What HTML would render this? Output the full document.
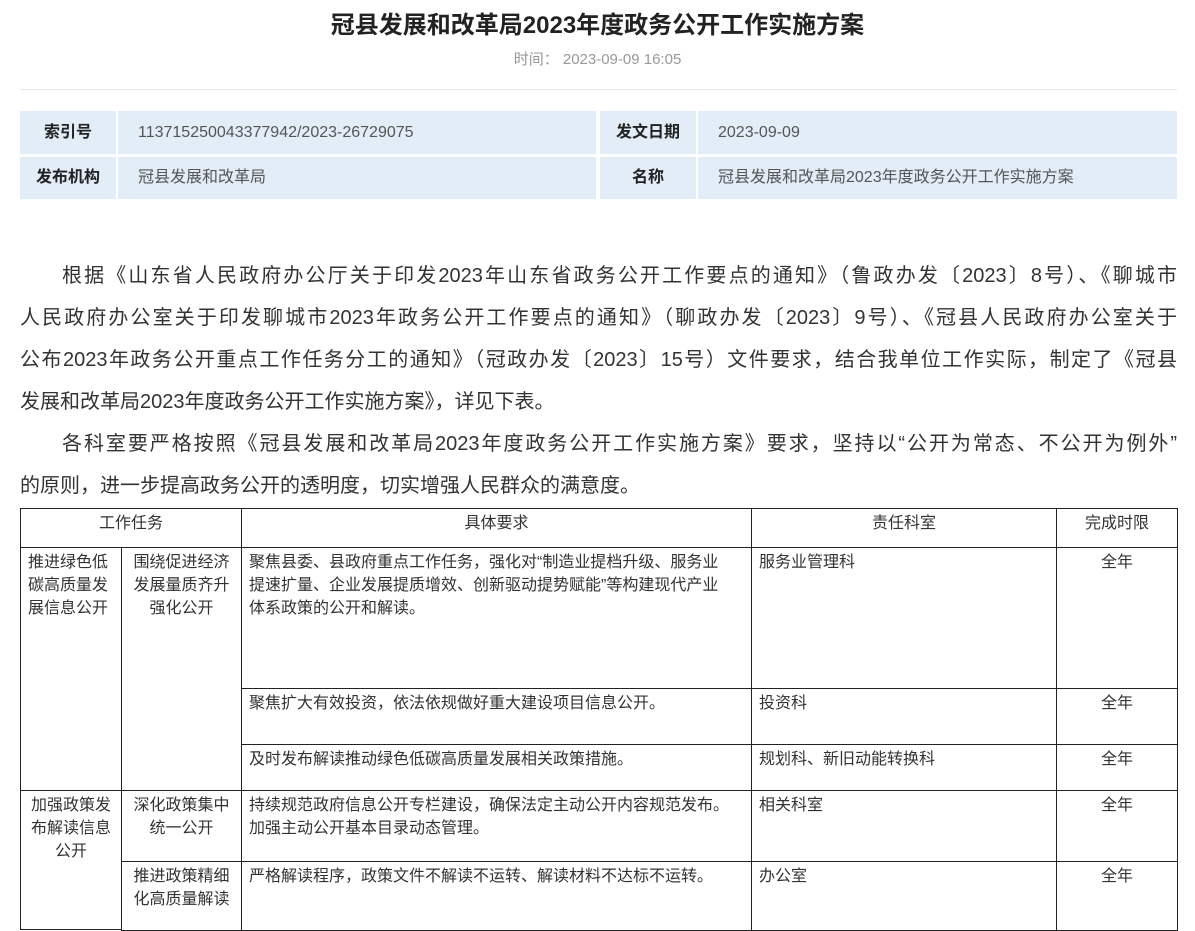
<!DOCTYPE html>
<html><head><meta charset="utf-8"><style>
*{margin:0;padding:0;box-sizing:border-box}
body{width:1195px;height:907px;overflow:hidden;background:#fff;position:relative;font-family:"Liberation Sans","Noto Sans CJK SC",sans-serif;color:#333}
.a{position:absolute}
h1{position:absolute;left:0;width:1195px;top:9px;text-align:center;font-size:24px;font-weight:bold;color:#222;line-height:34px}
.time{top:50px;left:0;width:1195px;text-align:center;font-size:15px;color:#999;line-height:20px}
.hr{left:20px;width:1157px;top:89px;height:1px;background:#e8e8e8}
.ib{background:#e3edf8;font-size:16px;line-height:20px;display:flex;align-items:center}
.lb{justify-content:center;font-weight:bold;color:#222}
.vb{padding-left:20px;color:#555;font-size:16px}
.p{left:20px;width:1157px;font-size:20px;line-height:42px;color:#333}
.p div{text-align:justify;text-align-last:justify;white-space:nowrap}
.p div.l{text-align-last:left}
.p div.i{padding-left:42px}
.c{position:absolute;border:1px solid #222;font-size:16px;line-height:23px;padding:3px 7px;color:#333;white-space:nowrap;overflow:hidden}
.ct{text-align:center}
</style></head><body>
<h1>冠县发展和改革局2023年度政务公开工作实施方案</h1>
<div class="a time">时间：&nbsp;2023-09-09 16:05</div>
<div class="a hr"></div>
<div class="a ib lb" style="left:20px;top:111px;width:96px;height:43px">索引号</div>
<div class="a ib vb" style="left:118px;top:111px;width:478px;height:43px">113715250043377942/2023-26729075</div>
<div class="a ib lb" style="left:600px;top:111px;width:96px;height:43px">发文日期</div>
<div class="a ib vb" style="left:698px;top:111px;width:479px;height:43px">2023-09-09</div>
<div class="a ib lb" style="left:20px;top:157px;width:96px;height:42px">发布机构</div>
<div class="a ib vb" style="left:118px;top:157px;width:478px;height:42px">冠县发展和改革局</div>
<div class="a ib lb" style="left:600px;top:157px;width:96px;height:42px">名称</div>
<div class="a ib vb" style="left:698px;top:157px;width:479px;height:42px">冠县发展和改革局2023年度政务公开工作实施方案</div>

<div class="a p" style="top:255px">
<div class="i">根据《山东省人民政府办公厅关于印发2023年山东省政务公开工作要点的通知》（鲁政办发〔2023〕8号）、《聊城市</div>
<div>人民政府办公室关于印发聊城市2023年政务公开工作要点的通知》（聊政办发〔2023〕9号）、《冠县人民政府办公室关于</div>
<div>公布2023年政务公开重点工作任务分工的通知》（冠政办发〔2023〕15号）文件要求，结合我单位工作实际，制定了《冠县</div>
<div class="l">发展和改革局2023年度政务公开工作实施方案》，详见下表。</div>
<div class="i">各科室要严格按照《冠县发展和改革局2023年度政务公开工作实施方案》要求，坚持以“公开为常态、不公开为例外”</div>
<div class="l">的原则，进一步提高政务公开的透明度，切实增强人民群众的满意度。</div>
</div>

<div class="c ct" style="left:20px;top:508px;width:222px;height:40px">工作任务</div>
<div class="c ct" style="left:241px;top:508px;width:511px;height:40px">具体要求</div>
<div class="c ct" style="left:751px;top:508px;width:306px;height:40px">责任科室</div>
<div class="c ct" style="left:1056px;top:508px;width:122px;height:40px">完成时限</div>

<div class="c" style="left:20px;top:547px;width:102px;height:244px">推进绿色低<br>碳高质量发<br>展信息公开</div>
<div class="c ct" style="left:121px;top:547px;width:121px;height:244px">围绕促进经济<br>发展量质齐升<br>强化公开</div>
<div class="c" style="left:241px;top:547px;width:511px;height:142px">聚焦县委、县政府重点工作任务，强化对“制造业提档升级、服务业<br>提速扩量、企业发展提质增效、创新驱动提势赋能”等构建现代产业<br>体系政策的公开和解读。</div>
<div class="c" style="left:751px;top:547px;width:306px;height:142px">服务业管理科</div>
<div class="c ct" style="left:1056px;top:547px;width:122px;height:142px">全年</div>
<div class="c" style="left:241px;top:688px;width:511px;height:57px">聚焦扩大有效投资，依法依规做好重大建设项目信息公开。</div>
<div class="c" style="left:751px;top:688px;width:306px;height:57px">投资科</div>
<div class="c ct" style="left:1056px;top:688px;width:122px;height:57px">全年</div>
<div class="c" style="left:241px;top:744px;width:511px;height:47px">及时发布解读推动绿色低碳高质量发展相关政策措施。</div>
<div class="c" style="left:751px;top:744px;width:306px;height:47px">规划科、新旧动能转换科</div>
<div class="c ct" style="left:1056px;top:744px;width:122px;height:47px">全年</div>

<div class="c ct" style="left:20px;top:790px;width:102px;height:140px">加强政策发<br>布解读信息<br>公开</div>
<div class="c ct" style="left:121px;top:790px;width:121px;height:72px">深化政策集中<br>统一公开</div>
<div class="c" style="left:241px;top:790px;width:511px;height:72px">持续规范政府信息公开专栏建设，确保法定主动公开内容规范发布。<br>加强主动公开基本目录动态管理。</div>
<div class="c" style="left:751px;top:790px;width:306px;height:72px">相关科室</div>
<div class="c ct" style="left:1056px;top:790px;width:122px;height:72px">全年</div>
<div class="c ct" style="left:121px;top:861px;width:121px;height:70px">推进政策精细<br>化高质量解读</div>
<div class="c" style="left:241px;top:861px;width:511px;height:70px">严格解读程序，政策文件不解读不运转、解读材料不达标不运转。</div>
<div class="c" style="left:751px;top:861px;width:306px;height:70px">办公室</div>
<div class="c ct" style="left:1056px;top:861px;width:122px;height:70px">全年</div>
</body></html>
